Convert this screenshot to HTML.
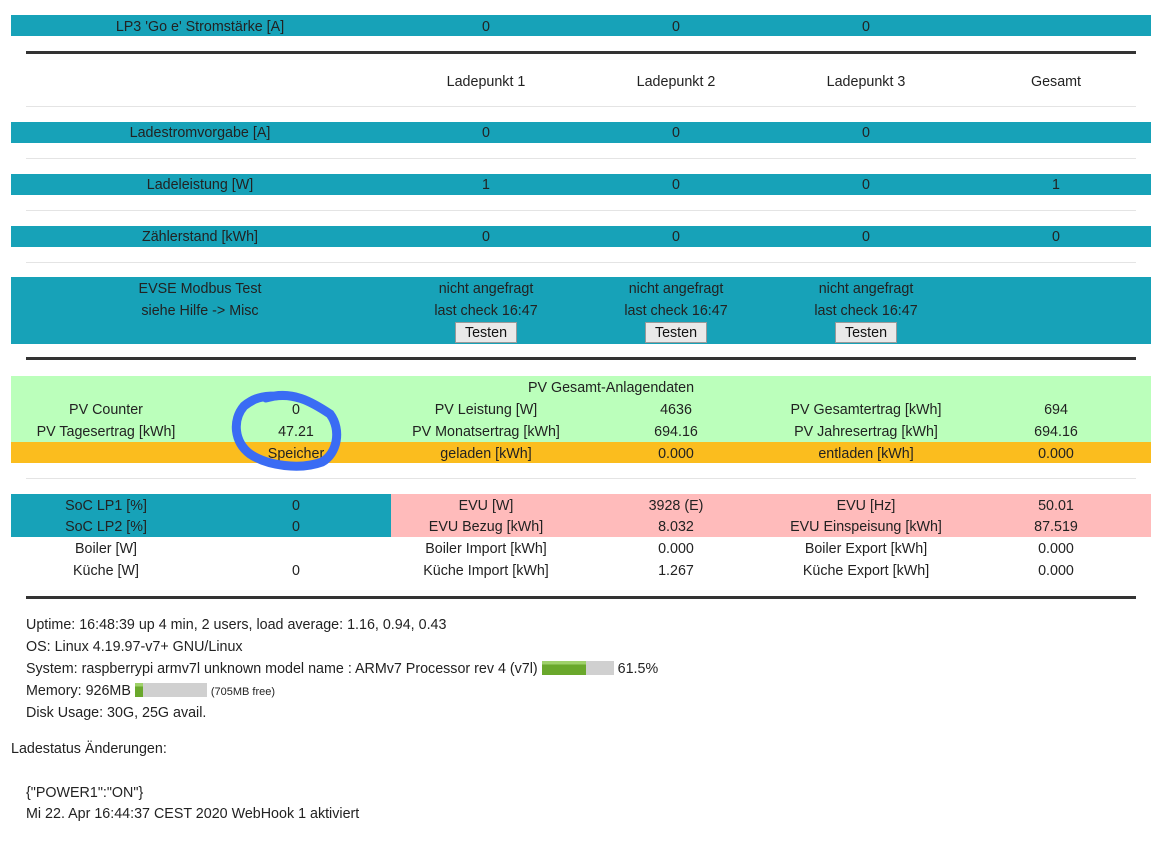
<!DOCTYPE html>
<html><head><meta charset="utf-8"><style>
*{margin:0;padding:0;box-sizing:border-box}
body{width:1174px;height:843px;background:#fff;position:relative;font-family:"Liberation Sans",sans-serif;font-size:14.3px;color:#222;overflow:hidden}
.bar{position:absolute;left:11px;width:1140px}
.teal{background:#17a2b8}
.t{position:absolute;width:190px;text-align:center;line-height:18px;white-space:nowrap;transform:translateY(-8px)}
.dk{position:absolute;left:26px;width:1110px;height:3px;background:#333}
.lt{position:absolute;left:26px;width:1110px;height:1px;background:#e4e4e4}
.btn{position:absolute;width:62px;height:21px;background:#e9e9e9;border:1px solid #999;text-align:center;line-height:20px;color:#111}
.l{position:absolute;left:26px;line-height:18px;transform:translateY(-8px);white-space:nowrap}
.pb{display:inline-block;vertical-align:-2px;height:14px;background:#d0d0d0;position:relative}
.pb i{position:absolute;left:0;top:0;bottom:0;background:linear-gradient(#9fd16a 0 25%,#6aa82c 25%)}
</style></head><body>
<div class="bar teal" style="top:15px;height:21px"></div>
<div class="t" style="left:105px;top:26px">LP3 'Go e' Stromstärke [A]</div>
<div class="t" style="left:391px;top:26px">0</div><div class="t" style="left:581px;top:26px">0</div><div class="t" style="left:771px;top:26px">0</div>
<div class="dk" style="top:51px"></div>
<div class="t" style="left:391px;top:81px">Ladepunkt 1</div><div class="t" style="left:581px;top:81px">Ladepunkt 2</div><div class="t" style="left:771px;top:81px">Ladepunkt 3</div><div class="t" style="left:961px;top:81px">Gesamt</div>
<div class="lt" style="top:106px"></div>
<div class="bar teal" style="top:122px;height:21px"></div>
<div class="t" style="left:105px;top:132px">Ladestromvorgabe [A]</div>
<div class="t" style="left:391px;top:132px">0</div><div class="t" style="left:581px;top:132px">0</div><div class="t" style="left:771px;top:132px">0</div>
<div class="lt" style="top:158px"></div>
<div class="bar teal" style="top:174px;height:21px"></div>
<div class="t" style="left:105px;top:184px">Ladeleistung [W]</div>
<div class="t" style="left:391px;top:184px">1</div><div class="t" style="left:581px;top:184px">0</div><div class="t" style="left:771px;top:184px">0</div><div class="t" style="left:961px;top:184px">1</div>
<div class="lt" style="top:210px"></div>
<div class="bar teal" style="top:226px;height:21px"></div>
<div class="t" style="left:105px;top:236px">Zählerstand [kWh]</div>
<div class="t" style="left:391px;top:236px">0</div><div class="t" style="left:581px;top:236px">0</div><div class="t" style="left:771px;top:236px">0</div><div class="t" style="left:961px;top:236px">0</div>
<div class="lt" style="top:262px"></div>
<div class="bar teal" style="top:277px;height:67px"></div>
<div class="t" style="left:105px;top:288px">EVSE Modbus Test</div><div class="t" style="left:105px;top:310px">siehe Hilfe -&gt; Misc</div>
<div class="t" style="left:391px;top:288px">nicht angefragt</div><div class="t" style="left:391px;top:310px">last check 16:47</div>
<div class="t" style="left:581px;top:288px">nicht angefragt</div><div class="t" style="left:581px;top:310px">last check 16:47</div>
<div class="t" style="left:771px;top:288px">nicht angefragt</div><div class="t" style="left:771px;top:310px">last check 16:47</div>
<div class="btn" style="left:455px;top:322px">Testen</div><div class="btn" style="left:645px;top:322px">Testen</div><div class="btn" style="left:835px;top:322px">Testen</div>
<div class="dk" style="top:357px"></div>
<div class="bar" style="top:376px;height:66px;background:#bbffbb"></div>
<div class="bar" style="top:442px;height:21px;background:#fbbd1e"></div>
<div class="t" style="left:486px;top:387px;width:250px">PV Gesamt-Anlagendaten</div>
<div class="t" style="left:11px;top:409px">PV Counter</div><div class="t" style="left:201px;top:409px">0</div><div class="t" style="left:391px;top:409px">PV Leistung [W]</div><div class="t" style="left:581px;top:409px">4636</div><div class="t" style="left:771px;top:409px">PV Gesamtertrag [kWh]</div><div class="t" style="left:961px;top:409px">694</div>
<div class="t" style="left:11px;top:431px">PV Tagesertrag [kWh]</div><div class="t" style="left:201px;top:431px">47.21</div><div class="t" style="left:391px;top:431px">PV Monatsertrag [kWh]</div><div class="t" style="left:581px;top:431px">694.16</div><div class="t" style="left:771px;top:431px">PV Jahresertrag [kWh]</div><div class="t" style="left:961px;top:431px">694.16</div>
<div class="t" style="left:201px;top:453px">Speicher</div><div class="t" style="left:391px;top:453px">geladen [kWh]</div><div class="t" style="left:581px;top:453px">0.000</div><div class="t" style="left:771px;top:453px">entladen [kWh]</div><div class="t" style="left:961px;top:453px">0.000</div>
<div class="lt" style="top:478px"></div>
<div style="position:absolute;left:11px;top:494px;width:380px;height:43px;background:#17a2b8"></div>
<div style="position:absolute;left:391px;top:494px;width:760px;height:43px;background:#ffbbbb"></div>
<div class="t" style="left:11px;top:505px">SoC LP1 [%]</div><div class="t" style="left:201px;top:505px">0</div><div class="t" style="left:391px;top:505px">EVU [W]</div><div class="t" style="left:581px;top:505px">3928 (E)</div><div class="t" style="left:771px;top:505px">EVU [Hz]</div><div class="t" style="left:961px;top:505px">50.01</div>
<div class="t" style="left:11px;top:526px">SoC LP2 [%]</div><div class="t" style="left:201px;top:526px">0</div><div class="t" style="left:391px;top:526px">EVU Bezug [kWh]</div><div class="t" style="left:581px;top:526px">8.032</div><div class="t" style="left:771px;top:526px">EVU Einspeisung [kWh]</div><div class="t" style="left:961px;top:526px">87.519</div>
<div class="t" style="left:11px;top:548px">Boiler [W]</div><div class="t" style="left:391px;top:548px">Boiler Import [kWh]</div><div class="t" style="left:581px;top:548px">0.000</div><div class="t" style="left:771px;top:548px">Boiler Export [kWh]</div><div class="t" style="left:961px;top:548px">0.000</div>
<div class="t" style="left:11px;top:570px">Küche [W]</div><div class="t" style="left:201px;top:570px">0</div><div class="t" style="left:391px;top:570px">Küche Import [kWh]</div><div class="t" style="left:581px;top:570px">1.267</div><div class="t" style="left:771px;top:570px">Küche Export [kWh]</div><div class="t" style="left:961px;top:570px">0.000</div>
<div class="dk" style="top:596px"></div>
<svg style="position:absolute;left:0;top:0" width="1174" height="843"><path d="M266 398 C292 390 312 402 330 414 C342 430 337 454 322 462 C300 470 268 466 250 454 C234 442 232 420 244 406 C254 398 262 396 276 396" fill="none" stroke="#3a6cf4" stroke-width="9" stroke-linecap="round"/></svg>
<div class="l" style="top:624px">Uptime: 16:48:39 up 4 min, 2 users, load average: 1.16, 0.94, 0.43</div>
<div class="l" style="top:646px">OS: Linux 4.19.97-v7+ GNU/Linux</div>
<div class="l" style="top:668px">System: raspberrypi armv7l unknown model name : ARMv7 Processor rev 4 (v7l) <span class="pb" style="width:72px"><i style="width:44px"></i></span> 61.5%</div>
<div class="l" style="top:690px">Memory: 926MB <span class="pb" style="width:72px"><i style="width:8px"></i></span> <span style="font-size:11px">(705MB free)</span></div>
<div class="l" style="top:712px">Disk Usage: 30G, 25G avail.</div>
<div class="l" style="left:11px;top:748px">Ladestatus Änderungen:</div>
<div class="l" style="top:792px">{"POWER1":"ON"}</div>
<div class="l" style="top:813px">Mi 22. Apr 16:44:37 CEST 2020 WebHook 1 aktiviert</div>
</body></html>
